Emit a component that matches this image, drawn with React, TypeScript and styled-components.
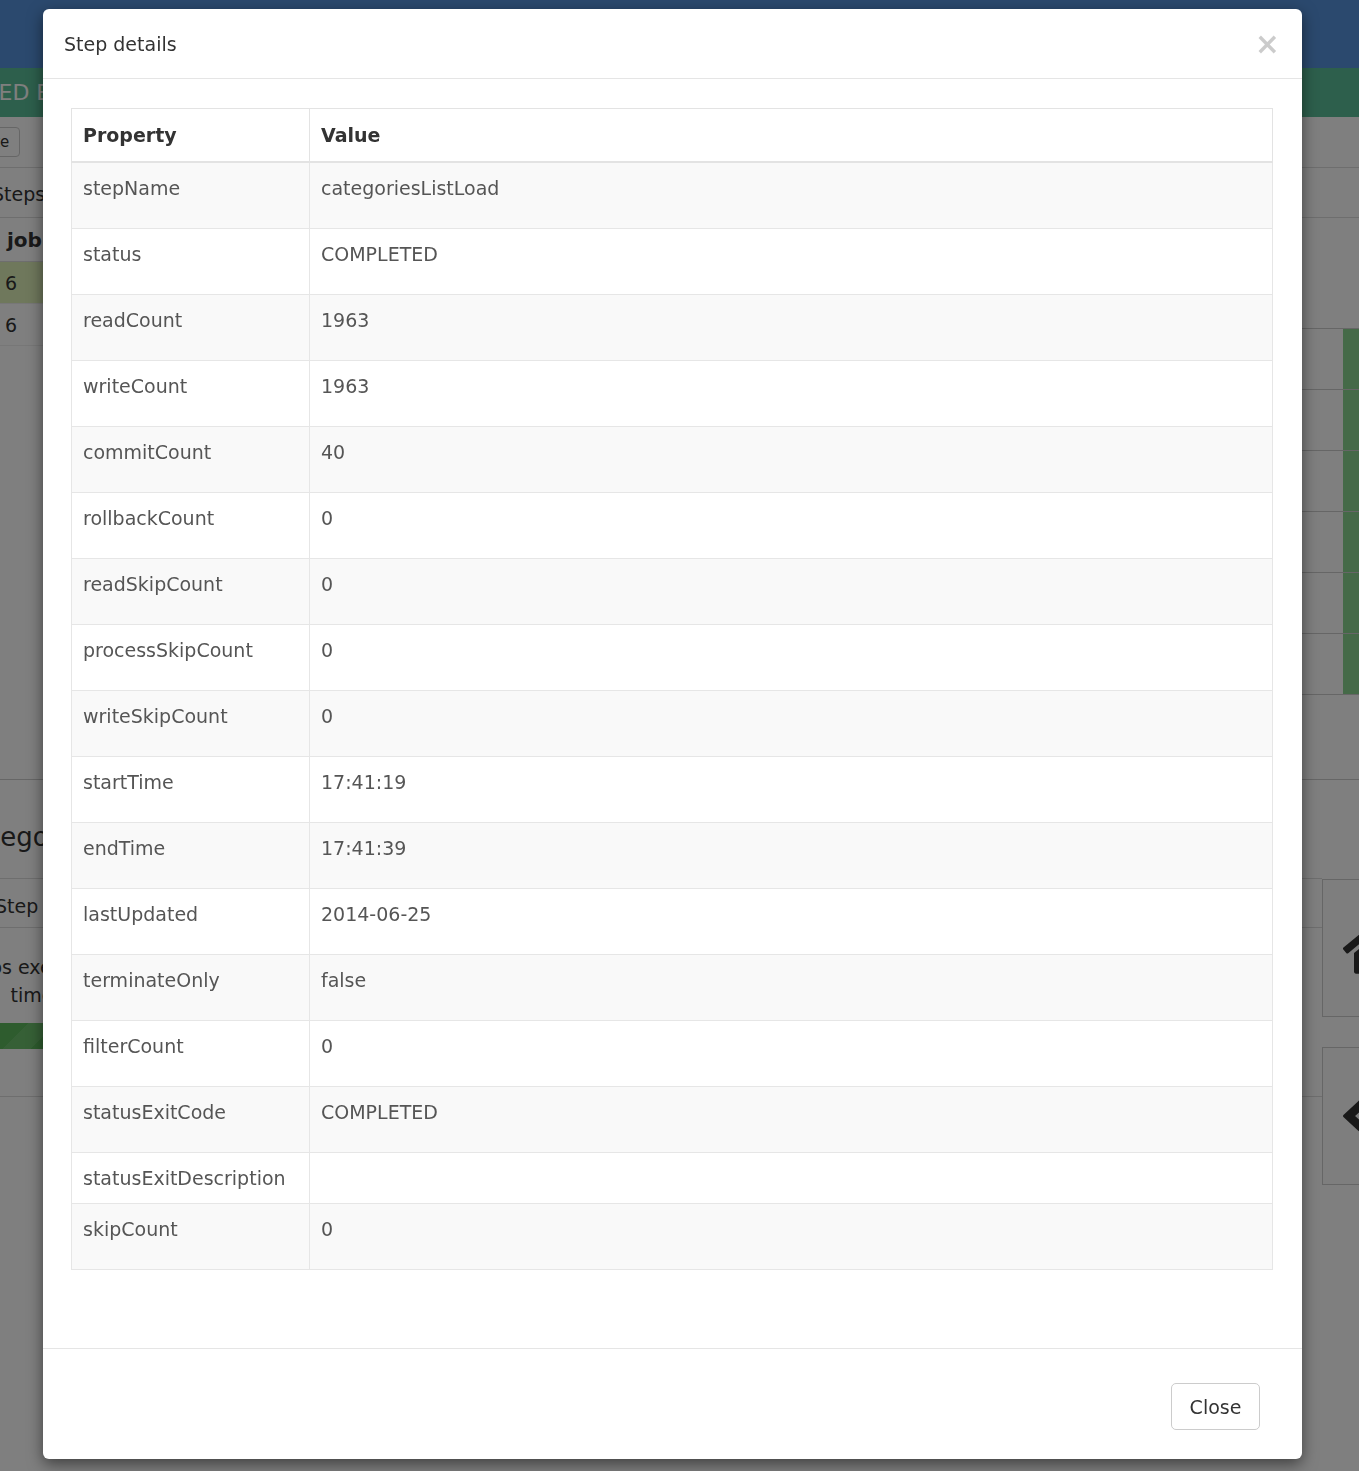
import * as React from 'react'
import styled, { createGlobalStyle } from 'styled-components'
import { FaHome, FaCode } from 'react-icons/fa'

const stepRows: [string, string][] = [
  ['stepName', 'categoriesListLoad'],
  ['status', 'COMPLETED'],
  ['readCount', '1963'],
  ['writeCount', '1963'],
  ['commitCount', '40'],
  ['rollbackCount', '0'],
  ['readSkipCount', '0'],
  ['processSkipCount', '0'],
  ['writeSkipCount', '0'],
  ['startTime', '17:41:19'],
  ['endTime', '17:41:39'],
  ['lastUpdated', '2014-06-25'],
  ['terminateOnly', 'false'],
  ['filterCount', '0'],
  ['statusExitCode', 'COMPLETED'],
  ['statusExitDescription', ''],
  ['skipCount', '0'],
]

const App = () => {
  return (
    <>
      <GlobalStyle />
      <Page>
        <NavBar />
        <StatusBar>
          <StatusText>COMPLETED EXECUTION</StatusText>
        </StatusBar>
        <Toolbar>
          <ToolButton>Update</ToolButton>
        </Toolbar>
        <TabBar>
          <TabTitle>Steps</TabTitle>
        </TabBar>
        <Split>
          <LeftPane>
            <JobTable>
              <thead>
                <tr>
                  <JobHead>jobExecutionId</JobHead>
                </tr>
              </thead>
              <tbody>
                <JobRow $success>
                  <JobCell>6</JobCell>
                </JobRow>
                <JobRow>
                  <JobCell>6</JobCell>
                </JobRow>
              </tbody>
            </JobTable>
          </LeftPane>
          <RightPane>
            {[0, 1, 2, 3, 4, 5].map((i) => (
              <StatRow key={i}>
                <StatLabel />
                <StatBar />
              </StatRow>
            ))}
          </RightPane>
        </Split>
        <Section>
          <SectionMain>
            <SectionTitle>Categories</SectionTitle>
            <SubHeader>Step name</SubHeader>
            <ProgressBlock>
              <ProgressCaption>
                Steps executed
                <br />
                time
              </ProgressCaption>
              <Progress />
            </ProgressBlock>
          </SectionMain>
          <Cards>
            <Card>
              <FaHome />
            </Card>
            <Card>
              <FaCode />
            </Card>
          </Cards>
        </Section>
      </Page>
      <Overlay />
      <Modal>
        <ModalHeader>
          <ModalTitle>Step details</ModalTitle>
          <CloseX aria-label="Close">×</CloseX>
        </ModalHeader>
        <ModalBody>
          <DetailTable>
            <thead>
              <tr>
                <HeadCell $first>Property</HeadCell>
                <HeadCell>Value</HeadCell>
              </tr>
            </thead>
            <tbody>
              {stepRows.map(([name, value], i) => (
                <DetailRow key={name} $striped={i % 2 === 0}>
                  <Cell>{name}</Cell>
                  <Cell $tall={value !== ''}>{value}</Cell>
                </DetailRow>
              ))}
            </tbody>
          </DetailTable>
        </ModalBody>
        <ModalFooter>
          <CloseButton>Close</CloseButton>
        </ModalFooter>
      </Modal>
    </>
  )
}

export default App

// Styles

const GlobalStyle = createGlobalStyle`
  html, body {
    margin: 0;
    padding: 0;
    overflow: hidden;
    font-family: "DejaVu Sans", Verdana, sans-serif;
  }
`

const Page = styled.div`
  min-height: 1471px;
  background: #fff;
  color: #333;
  font-size: 19px;
`

const NavBar = styled.div`
  height: 68px;
  background: #5692dd;
`

const StatusBar = styled.div`
  height: 49px;
  background: #5abe98;
  display: flex;
  align-items: center;
  overflow: hidden;
`

const StatusText = styled.span`
  margin-left: -106px;
  color: #fff;
  font-size: 22px;
  white-space: nowrap;
`

const Toolbar = styled.div`
  height: 50px;
  border-bottom: 1px solid #ddd;
  display: flex;
  align-items: center;
  overflow: hidden;
`

const ToolButton = styled.button`
  margin-left: -56px;
  height: 30px;
  padding: 0 10px;
  border: 1px solid #ccc;
  border-radius: 4px;
  background: #fff;
  font-family: inherit;
  font-size: 15px;
  color: #333;
`

const TabBar = styled.div`
  height: 49px;
  border-bottom: 1px solid #ddd;
  display: flex;
  align-items: center;
  overflow: hidden;
`

const TabTitle = styled.span`
  margin-left: -8px;
  padding-top: 3px;
  font-size: 19px;
`

const Split = styled.div`
  display: flex;
  height: 561px;
  border-bottom: 1px solid #ccc;
`

const LeftPane = styled.div`
  width: 640px;
`

const JobTable = styled.table`
  width: 100%;
  border-collapse: collapse;
`

const JobHead = styled.th`
  height: 43px;
  padding: 0 7px;
  text-align: left;
  font-size: 20px;
  border-bottom: 1px solid #ddd;
`

const JobRow = styled.tr<{ $success?: boolean }>`
  background: ${(p) => (p.$success ? '#dff0b8' : '#fff')};
`

const JobCell = styled.td`
  height: 41px;
  padding: 0 5px;
  font-size: 19px;
  border-bottom: 1px solid #eee;
`

const RightPane = styled.div`
  flex: 1;
  padding-top: 110px;
  display: flex;
  flex-direction: column;
`

const StatRow = styled.div`
  display: flex;
  height: 60px;
  border-top: 1px solid #ccc;

  &:last-child {
    border-bottom: 1px solid #ccc;
  }
`

const StatLabel = styled.div`
  width: 703px;
`

const StatBar = styled.div`
  flex: 1;
  background: #8bd590;
`

const Section = styled.div`
  display: flex;
`

const SectionMain = styled.div`
  flex: 1;
  overflow: hidden;
`

const SectionTitle = styled.div`
  height: 99px;
  box-sizing: border-box;
  padding-top: 16px;
  display: flex;
  align-items: center;
  margin-left: -44px;
  font-size: 26px;
  border-bottom: 1px solid #ddd;
`

const SubHeader = styled.div`
  height: 49px;
  box-sizing: border-box;
  padding-top: 6px;
  display: flex;
  align-items: center;
  margin-left: -5px;
  font-size: 19px;
  white-space: nowrap;
  border-bottom: 1px solid #ddd;
`

const ProgressBlock = styled.div`
  height: 169px;
  padding-top: 25px;
  box-sizing: border-box;
  border-bottom: 1px solid #ddd;
`

const ProgressCaption = styled.div`
  width: 150px;
  margin-left: -43px;
  text-align: center;
  font-size: 19px;
  line-height: 28px;
  white-space: nowrap;
`

const Progress = styled.div`
  margin-top: 14px;
  width: 400px;
  height: 26px;
  background: repeating-linear-gradient(
    135deg,
    #5cb85c 0 20px,
    #6cc06c 20px 40px
  );
`

const Cards = styled.div`
  width: 120px;
  margin-right: -83px;
  padding-top: 99px;
  display: flex;
  flex-direction: column;
  gap: 30px;
`

const Card = styled.div`
  height: 136px;
  border: 1px solid #ccc;
  background: #fcfcfc;
  display: flex;
  align-items: center;
  padding-left: 20px;
  font-size: 66px;
  color: #333;
`

const Overlay = styled.div`
  position: fixed;
  inset: 0;
  background: rgba(0, 0, 0, 0.5);
`

const Modal = styled.div`
  position: absolute;
  top: 9px;
  left: 43px;
  width: 1259px;
  background: #fff;
  border-radius: 6px;
  box-shadow: 0 5px 15px rgba(0, 0, 0, 0.5);
  font-family: "DejaVu Sans", Verdana, sans-serif;
`

const ModalHeader = styled.div`
  height: 69px;
  padding: 0 22px 0 21px;
  border-bottom: 1px solid #e5e5e5;
  display: flex;
  align-items: center;
  justify-content: space-between;
`

const ModalTitle = styled.h4`
  margin: 0;
  font-size: 19px;
  font-weight: normal;
  color: #333;
`

const CloseX = styled.button`
  border: 0;
  background: transparent;
  padding: 0;
  font-family: "DejaVu Sans", sans-serif;
  font-size: 30px;
  font-weight: bold;
  line-height: 1;
  color: #000;
  opacity: 0.2;
`

const ModalBody = styled.div`
  padding: 29px 29px 78px 28px;
`

const DetailTable = styled.table`
  width: 100%;
  border-collapse: collapse;
  border: 1px solid #e3e3e3;
  font-size: 19px;
  line-height: 26px;
`

const HeadCell = styled.th<{ $first?: boolean }>`
  width: ${(p) => (p.$first ? '215px' : 'auto')};
  padding: 13px 11px 13px;
  text-align: left;
  font-weight: bold;
  color: #333;
  border: 1px solid #e3e3e3;
  border-bottom: 2px solid #e3e3e3;
`

const DetailRow = styled.tr<{ $striped?: boolean }>`
  background: ${(p) => (p.$striped ? '#f9f9f9' : '#fff')};
`

const Cell = styled.td<{ $tall?: boolean }>`
  padding: 12px 11px ${(p) => (p.$tall ? '27px' : '12px')};
  vertical-align: top;
  color: #555;
  white-space: nowrap;
  border: 1px solid #e6e6e6;
`

const ModalFooter = styled.div`
  padding: 34px 42px 29px;
  border-top: 1px solid #e5e5e5;
  display: flex;
  justify-content: flex-end;
`

const CloseButton = styled.button`
  width: 89px;
  height: 47px;
  border: 1px solid #ccc;
  border-radius: 5px;
  background: #fff;
  font-family: "DejaVu Sans", Verdana, sans-serif;
  font-size: 19px;
  color: #333;
`
